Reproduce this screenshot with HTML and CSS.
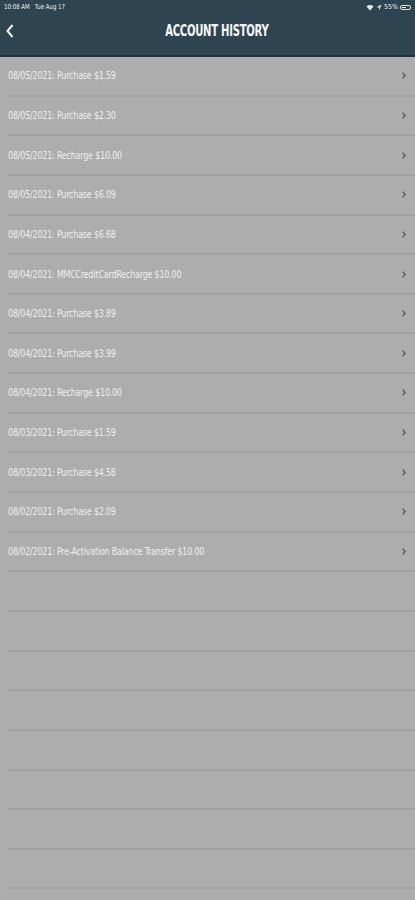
FILE: index.html
```html
<!DOCTYPE html>
<html lang="en">
<head>
    <meta charset="UTF-8">
    <meta name="viewport" content="width=device-width, initial-scale=1.0">
    <title>Account History</title>
    <link rel="stylesheet" href="styles.css">
</head>
<body>
    <div class="top-bar">
        <div class="status-bar">
            <span class="status-time">10:08 AM&nbsp;&nbsp; Tue Aug 17</span>
            <span class="status-right">
                <svg width="8" height="7" viewBox="0 0 8 7"><path d="M0.5 2.5 A5 5 0 0 1 7.5 2.5 L4 6.5 Z" fill="#e8edf0"/></svg>
                <svg width="6" height="7" viewBox="0 0 6 7"><path d="M5.5 0.5 L0.5 3.2 L3 3.5 L3.3 6.3 Z" fill="#e8edf0"/></svg>
                <span>55%</span>
                <span class="battery"><span class="battery-level"></span></span>
            </span>
        </div>
        <div class="nav-bar">
            <svg class="back" width="8" height="14" viewBox="0 0 8 14"><path d="M6.5 1 L1.5 7 L6.5 13" fill="none" stroke="#f2f4f5" stroke-width="2"/></svg>
            <h1>ACCOUNT HISTORY</h1>
        </div>
    </div>

    <ul class="history-list" id="history"></ul>

    <script>
        const items = [
            "08/05/2021: Purchase $1.59",
            "08/05/2021: Purchase $2.30",
            "08/05/2021: Recharge $10.00",
            "08/05/2021: Purchase $6.09",
            "08/04/2021: Purchase $6.68",
            "08/04/2021: MMCCreditCardRecharge $10.00",
            "08/04/2021: Purchase $3.89",
            "08/04/2021: Purchase $3.99",
            "08/04/2021: Recharge $10.00",
            "08/03/2021: Purchase $1.59",
            "08/03/2021: Purchase $4.58",
            "08/02/2021: Purchase $2.09",
            "08/02/2021: Pre-Activation Balance Transfer $10.00"
        ];

        const list = document.getElementById("history");
        for (let i = 0; i < 22; i++) {
            const li = document.createElement("li");
            li.className = "history-row";
            if (i < items.length) {
                li.innerHTML = `<span class="row-text">${items[i]}</span>
                    <svg class="chevron" width="4" height="7" viewBox="0 0 4 7"><path d="M0.6 0.6 L3.2 3.5 L0.6 6.4" fill="none" stroke="#555" stroke-width="1.3"/></svg>`;
            }
            list.appendChild(li);
        }
    </script>
</body>
</html>
```

FILE: styles.css
```css
body {
    margin: 0;
    padding: 0;
    background: #adadad;
    font-family: "DejaVu Sans Condensed", "Liberation Sans", sans-serif;
    width: 415px;
    height: 900px;
    overflow: hidden;
}

.top-bar {
    background: #2f4451;
    border-bottom: 2px solid #1e323e;
    height: 55px;
    color: #eef1f3;
}

.status-bar {
    height: 14px;
    display: flex;
    justify-content: space-between;
    align-items: center;
    padding: 0 4px;
    font-size: 7px;
}

.status-time {
    display: inline-block;
    transform: scaleX(0.86);
    transform-origin: left center;
}

.status-right {
    display: flex;
    align-items: center;
    gap: 2px;
}

.battery {
    width: 11px;
    height: 5px;
    border: 1px solid #dfe4e7;
    border-radius: 2px;
    padding: 1px;
    box-sizing: border-box;
    display: flex;
}

.battery-level {
    width: 55%;
    background: #eef1f3;
}

.nav-bar {
    height: 32px;
    display: flex;
    align-items: center;
    justify-content: center;
    padding-left: 19px;
    position: relative;
}

.back {
    position: absolute;
    left: 6px;
    top: 10px;
}

h1 {
    margin: 0;
    font-size: 16px;
    font-weight: bold;
    color: #f4f6f7;
    letter-spacing: -0.4px;
    transform: scaleX(0.7);
}

.history-list {
    list-style: none;
    margin: 0;
    padding: 0;
}

.history-row {
    height: 37.65px;
    margin-left: 8px;
    padding-right: 9px;
    border-bottom: 2px solid #a2a2a2;
    display: flex;
    align-items: center;
    justify-content: space-between;
}

.row-text {
    display: inline-block;
    font-size: 11px;
    color: #eeeeee;
    letter-spacing: -0.2px;
    transform: scaleX(0.8);
    transform-origin: left center;
    white-space: nowrap;
}

.chevron {
    display: block;
}
```
